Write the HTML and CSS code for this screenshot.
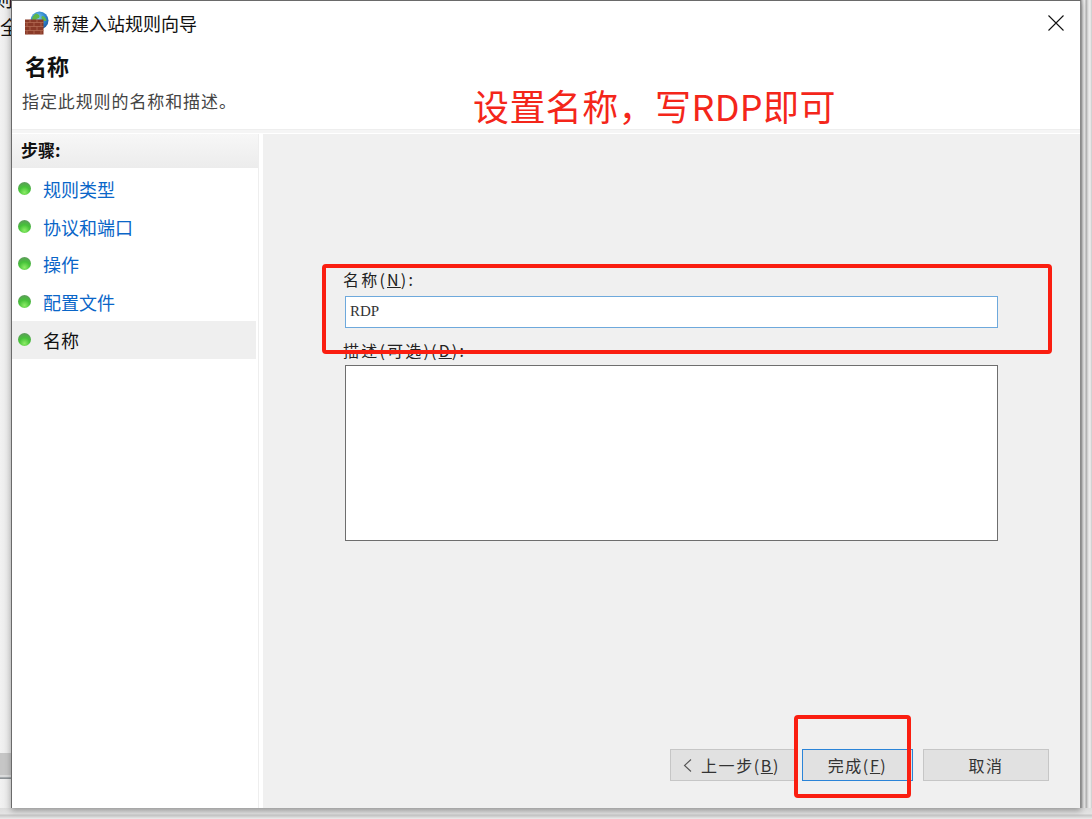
FILE: index.html
```html
<!DOCTYPE html>
<html lang="zh">
<head>
<meta charset="utf-8">
<title>新建入站规则向导</title>
<link rel="stylesheet" href="styles.css">
</head>
<body>
<div class="desktop">
  <div class="behind-text behind-a">则</div>
  <div class="behind-text behind-b">全</div>
  <div class="behind-band"></div>
  <div class="behind-right"></div>
  <div class="behind-bottom"></div>

  <section class="window">
    <header class="titlebar">
      <svg class="app-icon" width="24" height="24" viewBox="0 0 24 24">
        <defs>
          <radialGradient id="globe" cx="0.4" cy="0.35" r="0.7">
            <stop offset="0" stop-color="#7fd0f0"/>
            <stop offset="0.6" stop-color="#2f86cf"/>
            <stop offset="1" stop-color="#1d5a9e"/>
          </radialGradient>
        </defs>
        <circle cx="14.5" cy="9.5" r="9" fill="url(#globe)"/>
        <path d="M11 2.500c2 .5 4 1.500 3.500 3.500s-3 1-4 3-3 .5-3.500-1c.5-2.500 2-4.500 4-5.500zM17 5c2 0 4 2 4.500 4.500-1.500 1-3 .5-4-.5s-1.500-3-.5-4z" fill="#5fb648"/>
        <rect x="0" y="8.500" width="18.500" height="15" fill="#8a3a28"/>
        <path d="M0 11.500h18.500M0 15.500h18.500M0 19.500h18.500M5 8.500v3M12 8.500v3M2 11.500v4M9 11.500v4M16 11.500v4M5 15.500v4M12 15.500v4M2 19.500v4M9 19.500v4M16 19.500v4" stroke="#b8735a" stroke-width="0.700" fill="none"/>
      </svg>
      <span class="title-text">新建入站规则向导</span>
      <svg class="close-icon" width="16" height="16" viewBox="0 0 16 16">
        <path d="M.5.500l15 15M15.500.500l-15 15" stroke="#111" stroke-width="1.100" fill="none"/>
      </svg>
    </header>

    <div class="intro">
      <h1 class="intro-title">名称</h1>
      <p class="intro-desc">指定此规则的名称和描述。</p>
    </div>

    <div class="main">
      <nav class="steps">
        <div class="steps-head">步骤:</div>
        <ul class="step-list">
          <li class="step"><span class="dot"></span><span class="step-link">规则类型</span></li>
          <li class="step"><span class="dot"></span><span class="step-link">协议和端口</span></li>
          <li class="step"><span class="dot"></span><span class="step-link">操作</span></li>
          <li class="step"><span class="dot"></span><span class="step-link">配置文件</span></li>
          <li class="step step-current"><span class="dot"></span><span>名称</span></li>
        </ul>
      </nav>

      <div class="pane">
        <form class="form">
          <label class="field-label">名称(<u>N</u>):</label>
          <div class="input">RDP</div>
          <label class="field-label field-label-desc">描述(可选)(<u>D</u>):</label>
          <div class="textarea"></div>
        </form>
        <div class="buttons">
          <div class="btn btn-back">
            <svg class="chev" width="9" height="13" viewBox="0 0 9 13"><path d="M8 .5L1.500 6.500 8 12.500" stroke="#555" stroke-width="1.100" fill="none"/></svg>
            <span>上一步(<u>B</u>)</span>
          </div>
          <div class="btn btn-finish">完成(<u>F</u>)</div>
          <div class="btn btn-cancel">取消</div>
        </div>
      </div>
    </div>
  </section>

  <div class="note">设置名称，写RDP即可</div>
  <div class="mark mark-fields"></div>
  <div class="mark mark-finish"></div>
</div>
</body>
</html>
```

FILE: styles.css
```css
* { box-sizing: border-box; }
html, body { margin: 0; padding: 0; }
body {
  width: 1092px;
  height: 819px;
  overflow: hidden;
  font-family: "Noto Sans CJK SC", "Liberation Sans", sans-serif;
  color: #222;
}
.desktop {
  position: relative;
  width: 1092px;
  height: 819px;
  overflow: hidden;
  background: linear-gradient(90deg, #f2f2f2 0, #e6e6e6 11px);
}
.behind-text {
  position: absolute;
  font-size: 19px;
  line-height: 24px;
  color: #111;
}
.behind-a { left: -6px; top: -13px; }
.behind-b { left: 0; top: 15px; }
.behind-band {
  position: absolute;
  left: 0;
  top: 753px;
  width: 12px;
  height: 26px;
  background: linear-gradient(180deg, #c6c6c6 0, #c6c6c6 22px, #f2f2f2 23px, #8d9296 25px);
}
.behind-right {
  position: absolute;
  top: 0;
  left: 1081px;
  width: 11px;
  height: 819px;
  background: linear-gradient(90deg, #9c9c9c 0, #d8d8d8 2px, #ededed 4px, #a8a8a8 5px, #dcdcdc 7px, #f0f0f0 9px, #c8c8c8 11px);
}
.behind-bottom {
  position: absolute;
  left: 0;
  top: 808px;
  width: 1092px;
  height: 11px;
  background: linear-gradient(180deg, #dcdcdc 0, #e4e4e4 6px, #c4c4c4 7px, #ececec 11px);
}
.window {
  position: absolute;
  left: 11px;
  top: 0;
  width: 1070px;
  height: 808px;
  display: flex;
  flex-direction: column;
  background: #fff;
  border-left: 1px solid #6a6a6a;
  border-top: 1px solid #6a6a6a;
  border-right: 1px solid #8a8a8a;
  box-shadow: 0 3px 6px rgba(0, 0, 0, 0.3);
}
.titlebar {
  display: flex;
  align-items: center;
  height: 44px;
  flex: none;
  padding: 0 16px 0 13px;
}
.app-icon { flex: none; }
.title-text {
  margin-left: 4px;
  font-size: 18px;
  line-height: 24px;
  color: #111;
}
.close-icon { margin-left: auto; }
.intro {
  flex: none;
  height: 85px;
  padding-left: 10px;
  border-bottom: 1px solid #eee;
}
.intro-title {
  margin: 4px 0 0 3px;
  font-size: 22px;
  line-height: 32px;
  font-weight: 700;
  color: #111;
}
.intro-desc {
  margin: 8px 0 0;
  font-size: 17px;
  line-height: 24px;
  letter-spacing: 0.9px;
  color: #444;
}
.main {
  flex: 1;
  display: flex;
  min-height: 0;
  border-top: 3px solid #f5f5f5;
  padding-top: 1px;
  background: #fff;
}
.steps {
  flex: none;
  width: 247px;
  border-right: 1px solid #eee;
}
.steps-head {
  height: 34px;
  padding-left: 9px;
  font-size: 17px;
  line-height: 32px;
  font-weight: 700;
  color: #111;
  background: linear-gradient(180deg, #f7f7f7, #ececec);
}
.step-list { list-style: none; margin: 2px 0 0; padding: 0; }
.step {
  display: flex;
  align-items: center;
  height: 37.75px;
  padding-left: 6px;
  margin-right: 2px;
  font-size: 18px;
  color: #111;
}
.step-link { color: #0a66c8; }
.step-current { background: #efefef; }
.dot {
  flex: none;
  width: 13px;
  height: 13px;
  margin: -1px 12px 0 0;
  border-radius: 50%;
  background: radial-gradient(circle at 50% 80%, #8cec66 0, #45c238 45%, #5b9f58 80%, #a7c4a5 100%);
}
.pane {
  flex: 1;
  display: flex;
  flex-direction: column;
  margin-left: 4px;
  background: #f0f0f0;
  padding: 133px 29px 27px 82px;
}
.form { flex: 1; display: flex; flex-direction: column; }
.field-label {
  height: 29px;
  margin-left: -2px;
  font-size: 16px;
  line-height: 24px;
  letter-spacing: 2.2px;
  color: #222;
}
.field-label u { text-decoration-thickness: 1px; }
.field-label-desc { margin-top: 10px; height: 27px; }
.input {
  width: 653px;
  height: 32px;
  padding-left: 4px;
  border: 1px solid #6ea9dc;
  background: #fff;
  font-family: "Liberation Serif", serif;
  font-size: 15px;
  line-height: 29px;
  color: #333;
}
.textarea {
  width: 653px;
  height: 176px;
  border: 1px solid #6e6e6e;
  background: #fff;
}
.buttons {
  display: flex;
  height: 32px;
  margin-left: 325px;
  margin-right: -22px;
}
.btn {
  display: flex;
  align-items: center;
  justify-content: center;
  height: 32px;
  width: 126px;
  font-size: 16px;
  letter-spacing: 1.6px;
  color: #333;
  background: #e1e1e1;
  border: 1px solid #c6c6c6;
}
.btn-back { width: 127px; justify-content: flex-start; padding-left: 12px; }
.btn-finish { width: 111px; margin-left: 5px; border: 1px solid #2a84d8; }
.btn-cancel { margin-left: 10px; }
.chev { flex: none; margin-right: 9px; }
.note {
  position: absolute;
  left: 473px;
  top: 79px;
  font-size: 36px;
  line-height: 52px;
  letter-spacing: 0.4px;
  white-space: nowrap;
  color: #f4261a;
}
.mark {
  position: absolute;
  border: 4px solid #fa1e10;
  border-radius: 4px;
}
.mark-fields { left: 322px; top: 264px; width: 730px; height: 90px; }
.mark-finish { left: 794px; top: 715px; width: 117px; height: 83px; }
```
